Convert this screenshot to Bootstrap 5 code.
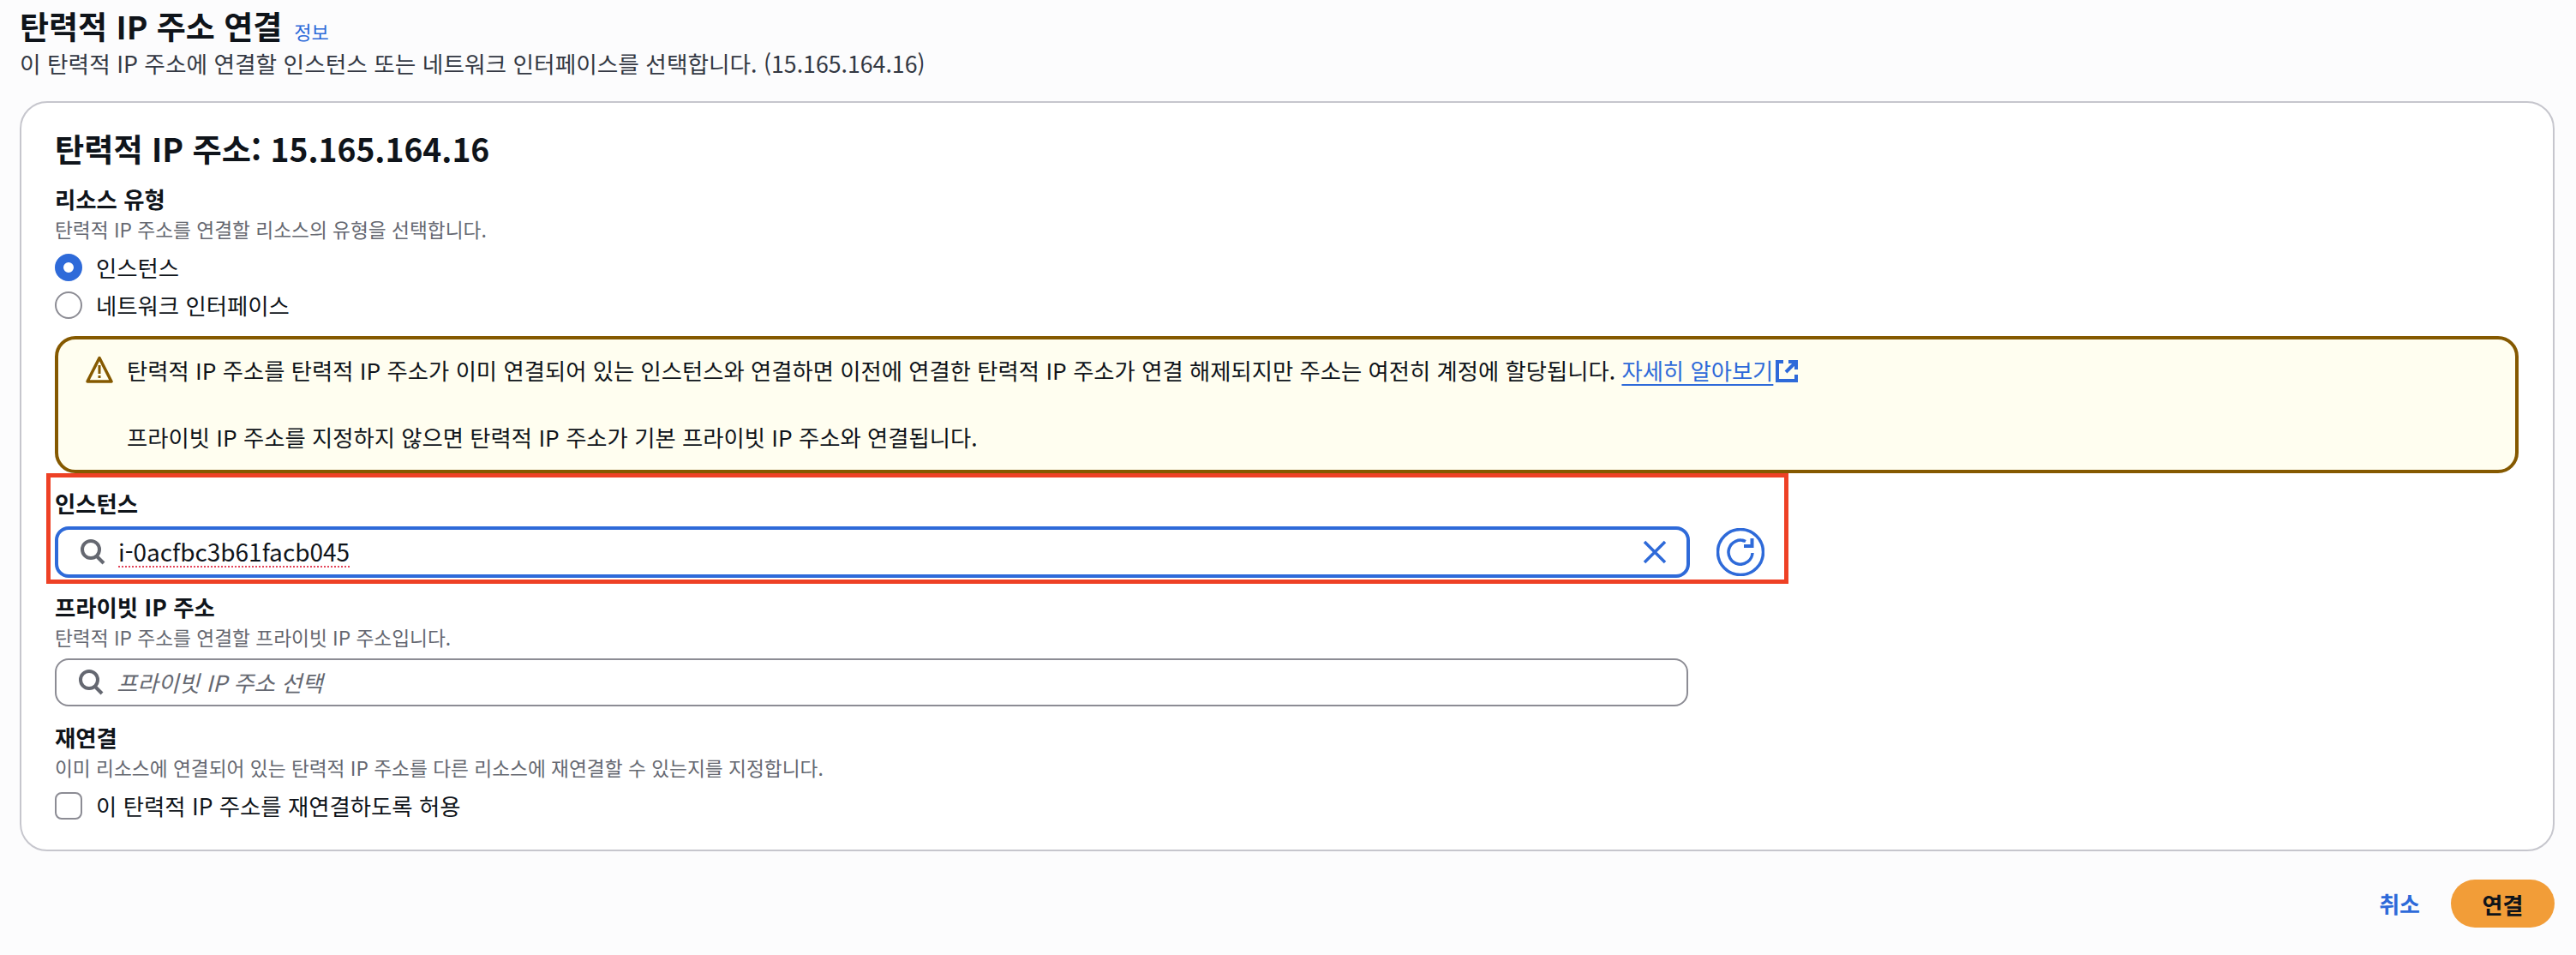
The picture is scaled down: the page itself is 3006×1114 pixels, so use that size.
<!DOCTYPE html>
<html lang="ko">

<head>
    <meta charset="UTF-8">
    <title>탄력적 IP 주소 연결</title>
    <link href="https://cdn.jsdelivr.net/npm/bootstrap@5.3.3/dist/css/bootstrap.min.css" rel="stylesheet">
    <style>
        body {
            background: #fcfcfd;
            color: #0f141a;
            font-family: "Noto Sans CJK KR", "Noto Sans", sans-serif;
            font-size: 26.4px;
            line-height: 36px;
            padding: 0 25px 0 23px;
        }

        .page-head { height: 118px; }
        .page-title { font-size: 37px; font-weight: 700; line-height: 39px; margin: 0; padding-top: 11px; }
        .info-link { font-size: 22px; font-weight: 400; color: #2e6ad9; text-decoration: none; margin-left: 14px; }
        .page-sub { font-size: 26.7px; line-height: 36px; color: #333843; margin: 0; }

        .main-panel { border: 2px solid #c6c6cd; border-radius: 32px; padding: 1px 40px 0 39px; height: 875px; }
        .panel-title { font-size: 37.2px; line-height: 48px; font-weight: 700; margin: 28px 0 17px; }

        .field-label { font-size: 26.4px; font-weight: 700; line-height: 36px; margin: 0; }
        .field-desc { font-size: 22.7px; line-height: 32px; padding-top: 2px; color: #656871; margin: 0; }

        .opt-row { height: 44px; margin: 0; padding: 0; gap: 16px; }
        .opt-row .form-check-input { width: 32px; height: 32px; margin: 0; float: none; border: 2px solid #8c8c94; flex: none; }
        .opt-row .form-check-input[type=radio]:checked { background: #fff; background-image: none; border: 10px solid #2e6ad9; }
        .opt-row .form-check-input[type=checkbox] { border-radius: 8px; }
        .opt-first { margin-top: 6px; }

        .warn-box {
            background: #fffef0;
            border: 4px solid #855900;
            border-radius: 24px;
            color: #0f141a;
            height: 160px;
            margin: 14px 0 0;
            padding: 18px 32px;
            gap: 16px;
        }
        .warn-box p { margin: 0; line-height: 36px; font-size: 26.33px; }
        .warn-box p + p { margin-top: 42px; }
        .warn-box a { color: #2e6ad9; text-underline-offset: 5px; }
        .warn-icon { flex: none; margin-top: 1px; }
        .ext-icon { vertical-align: -4px; margin-left: 2px; }

        .focus-zone { border: 5px solid #ee4125; width: 2033px; height: 129px; margin-left: -10px; padding: 12px 0 0 5px; }
        .focus-zone .field-label { margin-bottom: 9px; }
        .after-zone { margin-top: 9px; }
        .after-search { margin-top: 18px; }

        .search-box { border: 2px solid #8c8c94; border-radius: 16px; width: 1906px; height: 56px; margin-top: 8px; padding: 0 22px 0 24px; gap: 14px; background: #fff; }
        .search-box.is-focus { border: 4px solid #2e6ad9; height: 60px; width: 1908px; margin-top: 0; }
        .search-box .form-control { border: 0; padding: 0; background: transparent; box-shadow: none; font-size: 26.4px; color: #0f141a; }
        .search-box .form-control::placeholder { color: #656871; font-style: italic; }
        .search-box .typed-value { font-size: 28px; height: 48px; margin-top: -2px; text-decoration: underline dotted #e3455a 2px; text-underline-offset: 5px; }

        .zone-row { gap: 31px; }
        .round-btn { width: 56px; height: 56px; padding: 0; border: 0; background: none; }

        .page-foot { padding: 33px 0 0; gap: 36px; }
        .cancel-link { color: #2e6ad9; font-weight: 700; font-size: 26px; text-decoration: none; }
        .go-btn { background: #f29d38; border: 0; color: #0f141a; font-weight: 700; font-size: 26px; width: 121px; height: 56px; border-radius: 28px; padding: 0; }
    </style>
</head>

<body>
    <div class="page-head">
        <h1 class="page-title">탄력적 IP 주소 연결<a class="info-link" href="#">정보</a></h1>
        <p class="page-sub">이 탄력적 IP 주소에 연결할 인스턴스 또는 네트워크 인터페이스를 선택합니다. (15.165.164.16)</p>
    </div>

    <div class="main-panel bg-white">
        <h2 class="panel-title">탄력적 IP 주소: 15.165.164.16</h2>

        <p class="field-label">리소스 유형</p>
        <p class="field-desc">탄력적 IP 주소를 연결할 리소스의 유형을 선택합니다.</p>
        <div class="form-check opt-row opt-first d-flex align-items-center">
            <input class="form-check-input" type="radio" name="kind" id="kind1" checked>
            <label for="kind1">인스턴스</label>
        </div>
        <div class="form-check opt-row d-flex align-items-center">
            <input class="form-check-input" type="radio" name="kind" id="kind2">
            <label for="kind2">네트워크 인터페이스</label>
        </div>

        <div class="alert warn-box d-flex">
            <svg width="32" height="32" viewBox="0 0 32 32" class="warn-icon">
                <path d="M16 2.500 L30 30 H2 Z" fill="none" stroke="#855900" stroke-width="3.5" stroke-linejoin="round"/>
                <path d="M16 11 V21 M16 23 V26" stroke="#855900" stroke-width="3" fill="none"/>
            </svg>
            <div>
                <p>탄력적 IP 주소를 탄력적 IP 주소가 이미 연결되어 있는 인스턴스와 연결하면 이전에 연결한 탄력적 IP 주소가 연결 해제되지만 주소는 여전히 계정에 할당됩니다. <a href="#">자세히 알아보기</a><svg width="28" height="28" viewBox="0 0 28 28" class="ext-icon"><path d="M10 3 H3 V25 H25 V18 M16 3 H25 V12 M25 3 L13 15" fill="none" stroke="#2e6ad9" stroke-width="4"/></svg></p>
                <p>프라이빗 IP 주소를 지정하지 않으면 탄력적 IP 주소가 기본 프라이빗 IP 주소와 연결됩니다.</p>
            </div>
        </div>

        <div class="focus-zone">
            <p class="field-label">인스턴스</p>
            <div class="zone-row d-flex align-items-center">
                <div class="search-box is-focus d-flex align-items-center">
                    <svg width="32" height="32" viewBox="0 0 32 32" class="flex-shrink-0"><circle cx="14" cy="13" r="10" fill="none" stroke="#656871" stroke-width="4"/><path d="M21 21 L29 29" stroke="#656871" stroke-width="4"/></svg>
                    <input class="form-control typed-value" type="text" value="i-0acfbc3b61facb045">
                    <svg width="30" height="30" viewBox="0 0 30 30" class="flex-shrink-0"><path d="M3 3 L27 27 M27 3 L3 27" stroke="#2e6ad9" stroke-width="3.5"/></svg>
                </div>
                <button class="btn round-btn" type="button">
                    <svg width="56" height="56" viewBox="0 0 56 56" class="d-block"><circle cx="28" cy="28" r="26.500" fill="none" stroke="#2e6ad9" stroke-width="3.500"/><path d="M42 29 A14 14 0 1 1 34 15.500" fill="none" stroke="#2e6ad9" stroke-width="3.500"/><path d="M32 21 H41.500 V12" fill="none" stroke="#2e6ad9" stroke-width="4"/></svg>
                </button>
            </div>
        </div>

        <p class="field-label after-zone">프라이빗 IP 주소</p>
        <p class="field-desc">탄력적 IP 주소를 연결할 프라이빗 IP 주소입니다.</p>
        <div class="search-box d-flex align-items-center">
            <svg width="32" height="32" viewBox="0 0 32 32" class="flex-shrink-0"><circle cx="14" cy="13" r="10" fill="none" stroke="#656871" stroke-width="4"/><path d="M21 21 L29 29" stroke="#656871" stroke-width="4"/></svg>
            <input class="form-control" type="text" placeholder="프라이빗 IP 주소 선택">
        </div>

        <p class="field-label after-search">재연결</p>
        <p class="field-desc">이미 리소스에 연결되어 있는 탄력적 IP 주소를 다른 리소스에 재연결할 수 있는지를 지정합니다.</p>
        <div class="form-check opt-row opt-first d-flex align-items-center">
            <input class="form-check-input" type="checkbox" id="reassoc">
            <label for="reassoc">이 탄력적 IP 주소를 재연결하도록 허용</label>
        </div>
    </div>

    <div class="page-foot d-flex justify-content-end align-items-center">
        <a class="cancel-link" href="#">취소</a>
        <button class="btn go-btn" type="button">연결</button>
    </div>

    <script src="https://cdn.jsdelivr.net/npm/bootstrap@5.3.3/dist/js/bootstrap.bundle.min.js"></script>
</body>

</html>
